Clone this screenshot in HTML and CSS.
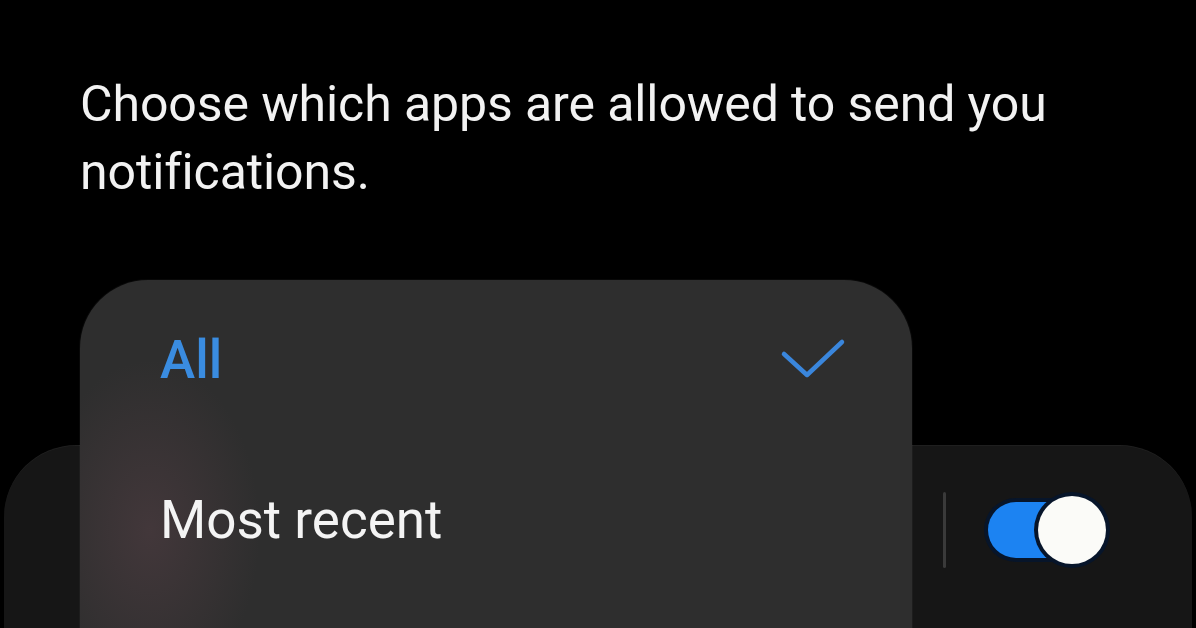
FILE: index.html
```html
<!DOCTYPE html>
<html lang="en">
<head>
<meta charset="utf-8">
<title>Notifications</title>
<link rel="stylesheet" href="styles.css">
</head>
<body>
<main class="screen">
  <p class="intro">Choose which apps are allowed to send you notifications.</p>
  <section class="stage">
    <div class="back-card">
      <div class="app-row">
        <span class="divider"></span>
        <span class="toggle"><span class="knob"></span></span>
      </div>
    </div>
    <ul class="menu">
      <li class="menu-item selected">
        <span>All</span>
        <svg class="check" width="70" height="44" viewBox="0 0 70 44"><path d="M6 16 L29 37 L64 4" fill="none" stroke="#3a86dc" stroke-width="4.5" stroke-linecap="round" stroke-linejoin="round"/></svg>
      </li>
      <li class="menu-item">Most recent</li>
    </ul>
  </section>
</main>
</body>
</html>
```

FILE: styles.css
```css
html, body {
  margin: 0;
  padding: 0;
  background: #000;
  overflow: hidden;
}
.screen {
  width: 1196px;
  height: 628px;
  overflow: hidden;
  font-family: Roboto, "Noto Sans", sans-serif;
  color: #f2f2f2;
}
.intro {
  margin: 0;
  padding: 70px 120px 0 80px;
  font-size: 50px;
  line-height: 68px;
  letter-spacing: -0.1px;
}
.stage {
  position: relative;
  margin-top: 239px;
  height: 400px;
}
.back-card {
  margin: 0 4px;
  height: 400px;
  background: #161616;
  border-radius: 72px 72px 0 0;
  box-shadow: inset 0 1px 0 rgba(255,255,255,0.04);
}
.app-row {
  display: flex;
  justify-content: flex-end;
  align-items: center;
  gap: 40px;
  padding: 47px 84px 0 0;
}
.divider {
  width: 3px;
  height: 76px;
  background: #3a3a3a;
  border-radius: 2px;
}
.toggle {
  position: relative;
  width: 122px;
  height: 70px;
  display: flex;
  align-items: center;
}
.toggle::before {
  content: "";
  width: 92px;
  height: 56px;
  margin-left: 2px;
  background: #1c83f2;
  border-radius: 28px;
  box-shadow: 0 0 0 4px #07152a;
}
.knob {
  position: absolute;
  right: 2px;
  top: 1px;
  width: 68px;
  height: 68px;
  border-radius: 50%;
  background: #fbfbf8;
  box-shadow: 0 0 0 4px #07152a;
}
.menu {
  position: absolute;
  left: 80px;
  top: -165px;
  width: 832px;
  height: 560px;
  margin: 0;
  padding: 0;
  list-style: none;
  border-radius: 68px 68px 0 0;
  background:
    radial-gradient(ellipse 110px 170px at 70px 250px, rgba(110,75,85,0.32), rgba(110,75,85,0) 100%),
    #2e2e2e;
  box-shadow: 0 0 0 1px rgba(255,255,255,0.03);
}
.menu-item {
  display: flex;
  justify-content: space-between;
  align-items: center;
  padding: 0 64px 0 80px;
  height: 160px;
  font-size: 53px;
  color: #f4f4f4;
}
.selected {
  color: #3a8ce0;
  font-weight: 500;
}
.check {
  display: block;
}
```
